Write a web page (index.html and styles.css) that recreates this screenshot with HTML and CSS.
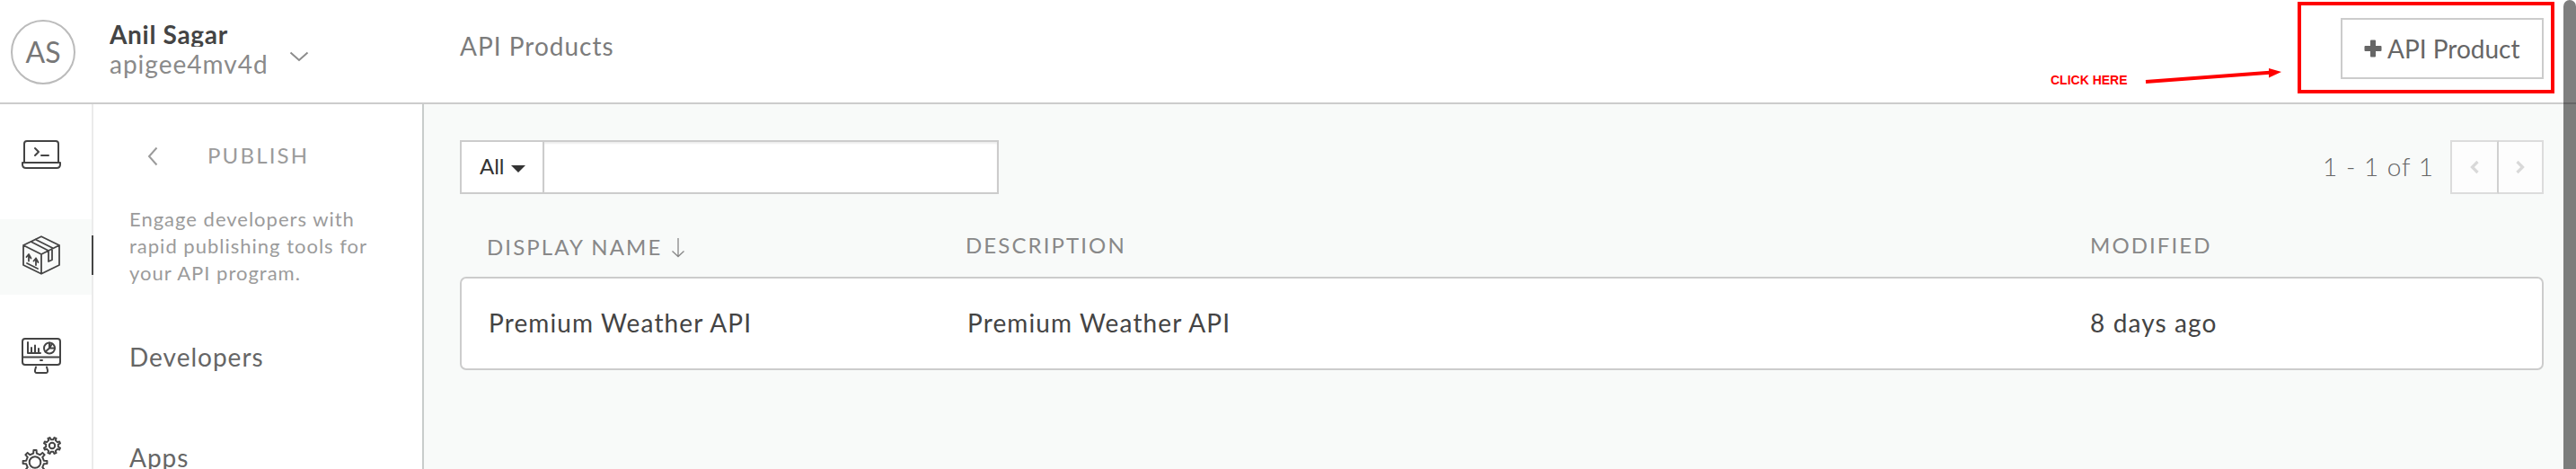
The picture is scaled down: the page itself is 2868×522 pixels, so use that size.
FILE: index.html
```html
<!DOCTYPE html>
<html lang="en">
<head>
<meta charset="utf-8">
<title>API Products</title>
<link rel="stylesheet" href="styles.css">
</head>
<body>
<div class="app">
  <header class="header">
    <div class="account">
      <div class="avatar">AS</div>
      <div class="account-text">
        <div class="account-name">Anil Sagar</div>
        <div class="account-org">apigee4mv4d</div>
      </div>
      <svg class="account-chevron" width="22" height="14" viewBox="0 0 22 14"><path d="M1.500 2.500 11 11 20.500 2.500"/></svg>
    </div>
    <h1 class="page-title">API Products</h1>
    <button class="add-button"><svg width="20" height="20" viewBox="0 0 20 20"><path d="M8 .5h4q1 0 1 1V7h5.500q1 0 1 1v4q0 1-1 1H13v5.500q0 1-1 1H8q-1 0-1-1V13H1.500q-1 0-1-1V8q0-1 1-1H7V1.500q0-1 1-1z"/></svg><span>API Product</span></button>
  </header>
  <div class="body">
    <nav class="rail">
      <a class="rail-item">
        <svg class="icon" width="44" height="44" viewBox="0 0 44 44"><path d="M3 30V10q0-3 3-3h32q3 0 3 3v20M1 31h42v2q0 4-4 4H5q-4 0-4-4zM15 15l4 4-4 4M22 23h8"/></svg>
      </a>
      <a class="rail-item active">
        <svg class="icon thin" width="44" height="44" viewBox="0 0 44 44"><path d="M22 1.200 42 11v22L22 42.800 2 33V11zM2 11l20 10 20-10M22 21v21.500M15.500 4.500l19 9.500M10.500 7l19.500 10M30 17v12l4-1.800V14M8 28.500V21.500M5.500 24 8 21l2.500 4.500M16 33V25.500M13.500 28.500l2.500-3 2.500 4.500M6 31l12 6"/></svg>
      </a>
      <a class="rail-item">
        <svg class="icon" width="44" height="44" viewBox="0 0 44 44"><path d="M4 3h36q3 0 3 3v23q0 3-3 3H4q-3 0-3-3V6q0-3 3-3zM1 23.500h42M21 27h2M16 34.500l-1 3.500q-.4 3 2 3h10q2.400 0 2-3l-1-3.500M7 7v12h14M11 19v-6M15 19v-8.500M19 19v-5"/><circle cx="31" cy="13.500" r="6"/><path d="M31 7.500v6l-4.500 4M31 13.500h6M31 13.500l3-5"/></svg>
      </a>
      <a class="rail-item">
        <svg class="icon" width="44" height="44" viewBox="0 0 44 44" id="gears"></svg>
      </a>
    </nav>
    <aside class="sidebar">
      <div class="sidebar-head">
        <svg width="14" height="22" viewBox="0 0 14 22"><path d="M11.500 1.500 3 11l8.500 9.500"/></svg>
        <span>PUBLISH</span>
      </div>
      <p class="sidebar-text">Engage developers with<br>rapid publishing tools for<br>your API program.</p>
      <a class="sidebar-link">Developers</a>
      <a class="sidebar-link">Apps</a>
    </aside>
    <main class="main">
      <div class="toolbar">
        <div class="search">
          <div class="search-scope"><span>All</span><i class="caret"></i></div>
          <input class="search-input" type="text" aria-label="Search">
        </div>
        <div class="pager">
          <span class="pager-text">1 - 1 of 1</span>
          <div class="pager-buttons">
            <button class="pager-button"><svg width="10" height="16" viewBox="0 0 10 16"><path d="M8.500 2 2.500 8l6 6"/></svg></button>
            <button class="pager-button"><svg width="10" height="16" viewBox="0 0 10 16"><path d="M1.500 2 7.500 8l-6 6"/></svg></button>
          </div>
        </div>
      </div>
      <div class="row head">
        <div class="cell sorted"><span>DISPLAY NAME</span><svg width="16" height="24" viewBox="0 0 16 24"><path d="M8 1v20.500M1.500 15.500 8 21.500l6.500-6"/></svg></div>
        <div class="cell">DESCRIPTION</div>
        <div class="cell">MODIFIED</div>
      </div>
      <div class="row card">
        <div class="cell">Premium Weather API</div>
        <div class="cell">Premium Weather API</div>
        <div class="cell">8 days ago</div>
      </div>
    </main>
  </div>
  <div class="callout-box"></div>
  <div class="callout-text">CLICK HERE</div>
  <svg class="callout-arrow" width="154" height="20" viewBox="0 0 154 20"><path d="M1 15 139 4.800"/><path class="tip" d="M138 0 152 4 138 10.500z"/></svg>
  <div class="scrollbar"></div>
</div>
<script src="gears.js"></script>
</body>
</html>
```
FILE: gears.js
```js
// Outline of a cog: rounded teeth around a circle, with a round hub.
// `turn` rotates the cog by a fraction of one tooth.
function gear(cx, cy, outer, inner, teeth, hub, turn) {
  const step = (Math.PI * 2) / teeth;
  const points = [];
  for (let i = 0; i < teeth; i++) {
    const mid = (i + turn) * step - Math.PI / 2;
    [[-0.24, inner], [-0.15, outer], [0.15, outer], [0.24, inner]].forEach(([k, r]) => {
      points.push((cx + r * Math.cos(mid + k * step)).toFixed(2) + " " + (cy + r * Math.sin(mid + k * step)).toFixed(2));
    });
  }
  return `<path d="M${points.join("L")}Z"/><circle cx="${cx}" cy="${cy}" r="${hub}"/>`;
}
document.getElementById("gears").innerHTML = gear(15, 28.5, 13.5, 10, 8, 6.3, 0) + gear(34, 10, 9.3, 7, 8, 3.2, 0.5);
```
FILE: styles.css
```css
* { box-sizing: border-box; }
body { margin: 0; background: #fff; font-family: Lato, "Liberation Sans", sans-serif; color: #444; }
.app { position: relative; width: 2868px; height: 522px; overflow: hidden; display: flex; flex-direction: column; }
svg { fill: none; stroke: currentColor; stroke-width: 2; display: block; flex: none; }
button { font: inherit; color: inherit; border-radius: 0; padding: 0; }

.header { height: 116px; flex: none; border-bottom: 2px solid #ccc; display: flex; padding-right: 36px; }
.account { width: 512px; display: flex; padding: 22px 0 0 12px; }
.avatar { width: 72px; height: 72px; border: 2px solid #bbb; border-radius: 50%; text-align: center; font-size: 32px; line-height: 68px; color: #777; }
.account-text { padding-left: 38px; width: 239px; font-size: 28px; }
.account-name { font-weight: 700; height: 30px; line-height: 32px; letter-spacing: .7px; overflow: hidden; }
.account-org { color: #8a8a8a; letter-spacing: 1px; line-height: 34px; margin-top: 2px; }
.account-chevron { margin: 34px 0 0 -1px; color: #8c8c8c; }
.page-title { margin: 0; flex: 1; font-size: 28px; font-weight: 400; letter-spacing: 1px; line-height: 34px; padding-top: 34px; color: #7c7c7c; }
.add-button { width: 226px; height: 68px; margin-top: 20px; border: 2px solid #ccc; background: #fff; display: flex; align-items: center; padding-left: 24px; font-size: 28px; color: #666; }
.add-button span { padding-bottom: 1px; }
.add-button svg { margin-right: 6px; fill: #666; stroke: none; }

.body { flex: 1; display: flex; min-height: 0; }
.rail { width: 104px; flex: none; border-right: 2px solid #ebebeb; padding-top: 16px; display: flex; flex-direction: column; gap: 28px; }
.rail-item { width: 102px; height: 84px; flex: none; display: flex; align-items: center; padding: 0 0 4px 24px; position: relative; }
.rail-item.active { background: #f8faf9; }
.rail-item.active::after { content: ""; position: absolute; left: 102px; top: 18px; width: 2px; height: 44px; background: #444; }
.icon { color: #444; stroke-linejoin: round; stroke-linecap: round; }
.icon.thin { stroke-width: 1.800; }

.sidebar { width: 368px; flex: none; border-right: 2px solid #c8cccb; padding-left: 40px; }
.sidebar-head { display: flex; align-items: center; padding: 42px 0 0 18px; height: 72px; font-size: 24px; line-height: 30px; letter-spacing: 2.200px; color: #9b9b9b; }
.sidebar-head svg { margin: 2px 54px 0 1px; }
.sidebar-text { margin: 41px 0 62px; font-size: 22px; line-height: 30px; letter-spacing: 1px; color: #9b9b9b; }
.sidebar-link { display: block; height: 112px; font-size: 28px; line-height: 34px; margin-top: -8px; padding-top: 7px; letter-spacing: 1px; color: #666; }
.sidebar-link + .sidebar-link { margin-top: 0; }

.main { flex: 1; background: #f8faf9; padding: 40px 36px 0 40px; }
.toolbar { display: flex; justify-content: space-between; height: 60px; }
.search { width: 600px; border: 2px solid #ccc; background: #fff; display: flex; }
.search-scope { width: 92px; border-right: 2px solid #ccc; display: flex; align-items: center; padding: 0 0 3px 20px; font-size: 24px; color: #333; }
.caret { margin: 6px 0 0 7px; border: 8px solid transparent; border-top-color: #333; border-bottom: 0; }
.search-input { flex: 1; min-width: 0; border: 0; padding: 0 12px; font-size: 24px; background: #fff; box-shadow: inset 0 2px 2px rgba(0,0,0,.07); }
.pager { display: flex; align-items: center; }
.pager-text { font-size: 28px; font-weight: 300; letter-spacing: 1px; color: #666; margin-right: 18px; padding-bottom: 2px; }
.pager-buttons { display: flex; height: 60px; }
.pager-button { width: 54px; background: #fdfdfd; border: 2px solid #dcdcdc; border-right-color: #d0d0d0; display: flex; align-items: center; justify-content: center; color: #d9d9d9; }
.pager-button svg { stroke-width: 3.200; }
.pager-button + .pager-button { border-left-width: 0; border-right-color: #dcdcdc; width: 50px; }
.row { display: grid; grid-template-columns: 533px 1252px 1fr; }
.head { height: 92px; padding: 42px 0 0 30px; font-size: 24px; line-height: 30px; letter-spacing: 2.100px; color: #888; }
.sorted { display: flex; padding-top: 2px; }
.sorted svg { margin: 4px 0 0 10px; stroke-width: 1.300; }
.card { grid-template-columns: 533px 1250px 1fr; height: 104px; border: 2px solid #ccc; border-radius: 7px; background: #fff; padding-left: 30px; font-size: 28px; line-height: 98px; letter-spacing: 1.120px; }

.callout-box { position: absolute; left: 2558px; top: 2px; width: 286px; height: 102px; border: 4px solid #f00; }
.callout-text { position: absolute; left: 2283px; top: 81px; font: 700 14px/16px "Liberation Sans", Arial, sans-serif; color: #f00; white-space: nowrap; }
.callout-arrow { position: absolute; left: 2388px; top: 76px; color: #f00; stroke-width: 4; }
.callout-arrow .tip { fill: #f00; stroke: none; }
.scrollbar { position: absolute; right: 0; top: 0; width: 14px; height: 540px; border-radius: 7px; background: rgba(0,0,0,.5); }
```
